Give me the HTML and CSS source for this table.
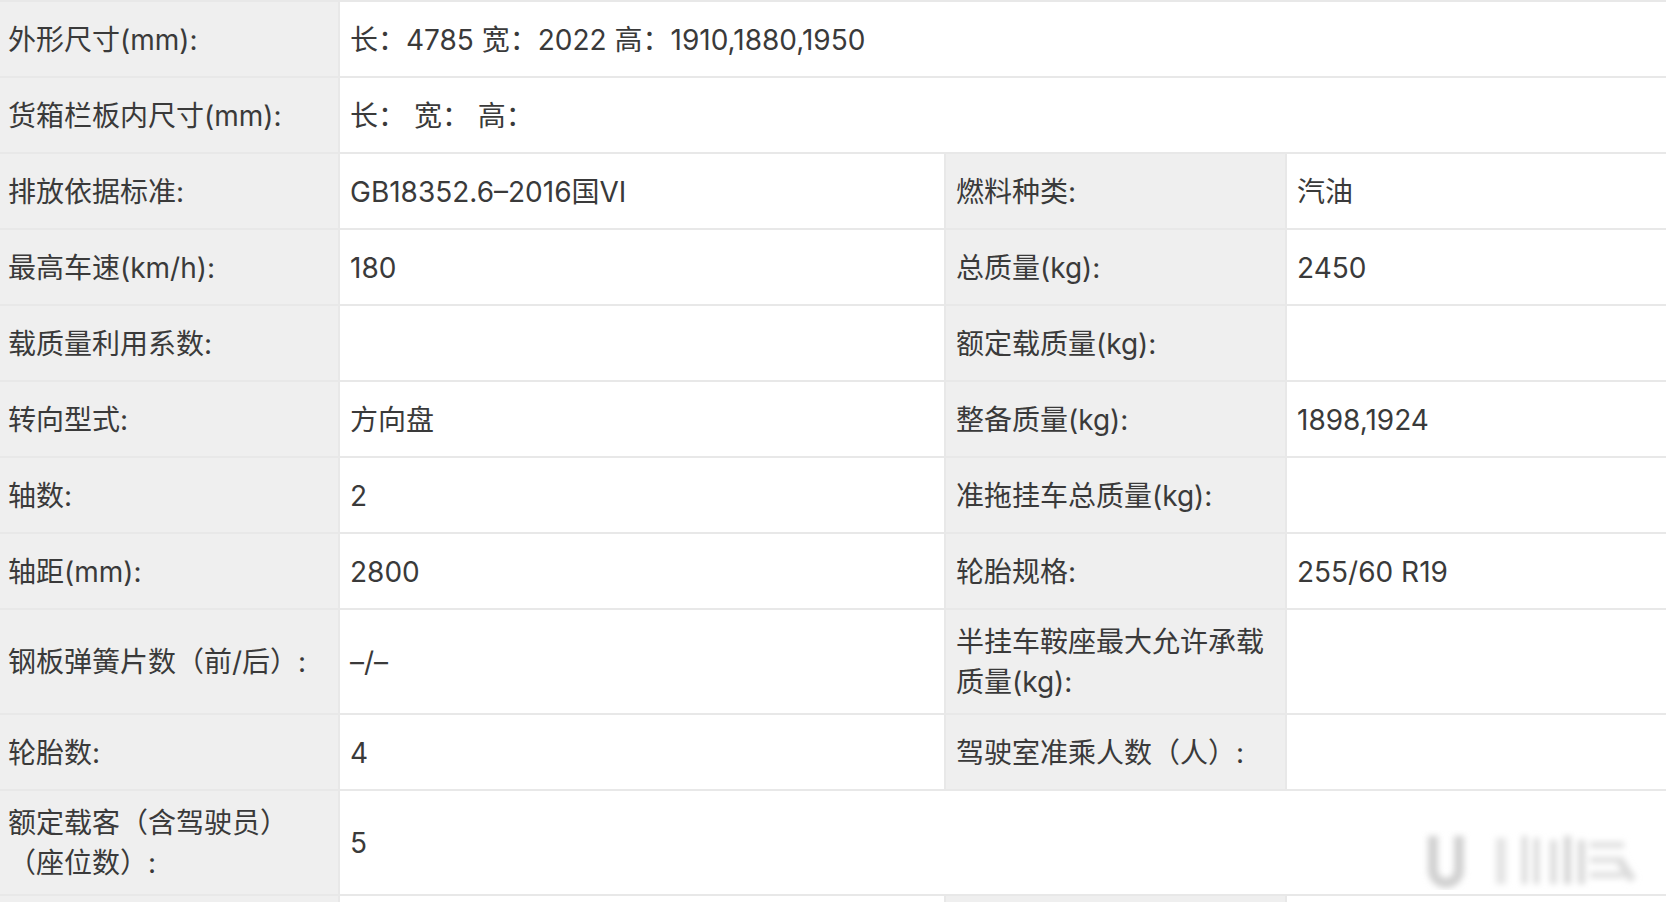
FILE: index.html
```html
<!DOCTYPE html>
<html lang="zh-CN">
<head>
<meta charset="utf-8">
<title>车辆参数</title>
<link rel="stylesheet" href="styles.css">
</head>
<body>
<div class="page">
<table class="spec">
  <colgroup>
    <col class="c1"><col class="c2"><col class="c3"><col class="c4">
  </colgroup>
  <tbody>
    <tr><th>外形尺寸(mm):</th><td colspan="3">长：4785 宽：2022 高：1910,1880,1950</td></tr>
    <tr><th>货箱栏板内尺寸(mm):</th><td colspan="3">长： 宽： 高：</td></tr>
    <tr><th>排放依据标准:</th><td>GB18352.6–2016国VI</td><th class="l2">燃料种类:</th><td>汽油</td></tr>
    <tr><th>最高车速(km/h):</th><td>180</td><th class="l2">总质量(kg):</th><td>2450</td></tr>
    <tr><th>载质量利用系数:</th><td></td><th class="l2">额定载质量(kg):</th><td></td></tr>
    <tr><th>转向型式:</th><td>方向盘</td><th class="l2">整备质量(kg):</th><td>1898,1924</td></tr>
    <tr><th>轴数:</th><td>2</td><th class="l2">准拖挂车总质量(kg):</th><td></td></tr>
    <tr><th>轴距(mm):</th><td>2800</td><th class="l2">轮胎规格:</th><td>255/60 R19</td></tr>
    <tr><th>钢板弹簧片数（前/后）:</th><td>–/–</td><th class="l2">半挂车鞍座最大允许承载质量(kg):</th><td></td></tr>
    <tr><th>轮胎数:</th><td>4</td><th class="l2">驾驶室准乘人数（人）:</th><td></td></tr>
    <tr><th>额定载客（含驾驶员）（座位数）:</th><td colspan="3">5</td></tr>
    <tr><th>&nbsp;</th><td></td><th class="l2">&nbsp;</th><td></td></tr>
  </tbody>
</table>
<div class="watermark" aria-hidden="true">
  <svg width="250" height="60" viewBox="0 0 250 60">
    <defs>
      <filter id="bl" x="-20%" y="-30%" width="140%" height="160%"><feGaussianBlur stdDeviation="3"/></filter>
    </defs>
    <g filter="url(#bl)" fill="#d4d4d4">
      <path d="M10 6 h10 v34 a8 8 0 0 0 16 0 v-34 h10 v34 a18 18 0 0 1 -36 0 z" fill="#d0d0d0"/>
      <rect x="78" y="8" width="10" height="46" fill="#e4e4e4"/>
      <rect x="104" y="6" width="5" height="48"/>
      <rect x="116" y="8" width="5" height="46"/>
      <rect x="132" y="10" width="7" height="44" fill="#dcdcdc"/>
      <rect x="146" y="6" width="7" height="48"/>
      <rect x="160" y="10" width="7" height="44" fill="#d8d8d8"/>
      <rect x="172" y="12" width="34" height="6" fill="#dedede"/>
      <rect x="172" y="27" width="34" height="6" fill="#dedede"/>
      <rect x="172" y="42" width="34" height="6" fill="#dedede"/>
      <path d="M206 30 l12 18 l-7 4 l-12 -18 z" fill="#dadada"/>
    </g>
  </svg>
</div>
</div>
</body>
</html>
```

FILE: styles.css
```css
html, body {
  margin: 0;
  padding: 0;
  background: #ffffff;
}

.page {
  position: relative;
  width: 1666px;
  height: 902px;
  overflow: hidden;
}

.spec {
  width: 1666px;
  table-layout: fixed;
  border-collapse: collapse;
  font-family: "Inter", "Noto Sans CJK SC", sans-serif;
  font-size: 28px;
  color: #3a3a3a;
}

.c1 { width: 339px; }
.c2 { width: 606px; }
.c3 { width: 341px; }
.c4 { width: 380px; }

.spec th,
.spec td {
  border: 2px solid #e8e8e8;
  padding: 12px 10px 11px 10px;
  height: 51px;
  line-height: 40px;
  vertical-align: middle;
  text-align: left;
  font-weight: 400;
  background: #ffffff;
}

.spec th {
  background: #efefef;
  padding-left: 8px;
}

.spec th.l2 {
  padding-left: 10px;
  padding-right: 14px;
}

.spec th:first-child { border-left: none; }
.spec td:last-child { border-right: none; }

.watermark {
  position: absolute;
  left: 1418px;
  top: 830px;
}
```
